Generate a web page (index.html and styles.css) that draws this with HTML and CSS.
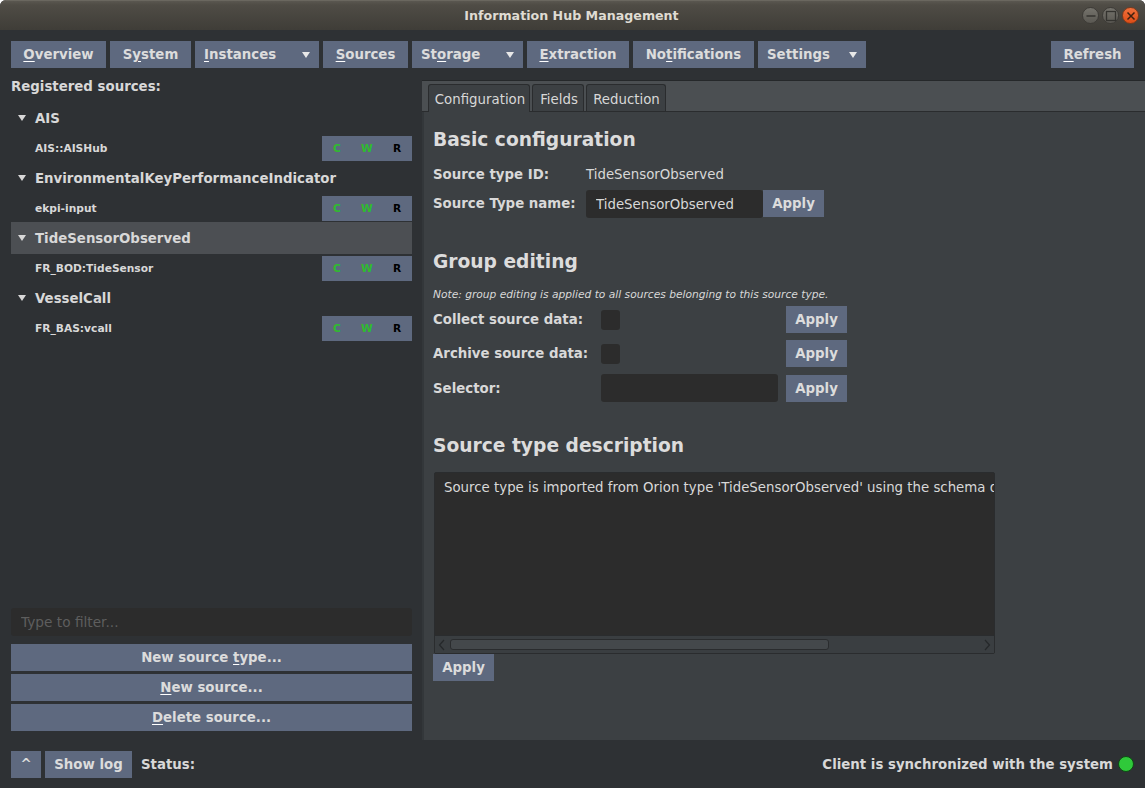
FILE: index.html
```html
<!DOCTYPE html>
<html lang="en">
  <head>
    <meta charset="UTF-8" />
    <meta name="viewport" content="width=device-width, initial-scale=1.0" />
    <title>Information Hub Management</title>
    <link rel="stylesheet" href="styles.css">
  </head>
  <body>
    <div class="window">
      <!-- Title bar -->
      <header class="titlebar">
        <span class="title">Information Hub Management</span>
        <div class="win-controls">
          <span class="win-btn"><svg width="12" height="12" viewBox="0 0 12 12"><path d="M1.5 6h9" stroke="#34332f" stroke-width="1.4" fill="none"/></svg></span>
          <span class="win-btn"><svg width="12" height="12" viewBox="0 0 12 12"><rect x="1.5" y="1.5" width="9" height="9" stroke="#34332f" stroke-width="1.3" fill="none"/></svg></span>
          <span class="win-btn close"><svg width="12" height="12" viewBox="0 0 12 12"><path d="M2.5 2.5l7 7M9.5 2.5l-7 7" stroke="#3f2010" stroke-width="1.5" fill="none"/></svg></span>
        </div>
      </header>

      <!-- Main toolbar -->
      <nav class="toolbar">
        <button class="btn tb-overview"><u>O</u>verview</button>
        <button class="btn tb-system">S<u>y</u>stem</button>
        <button class="btn menu tb-instances"><span><u>I</u>nstances</span><i class="arrow"></i></button>
        <button class="btn tb-sources"><u>S</u>ources</button>
        <button class="btn menu tb-storage"><span>St<u>o</u>rage</span><i class="arrow"></i></button>
        <button class="btn tb-extraction"><u>E</u>xtraction</button>
        <button class="btn tb-notifications">No<u>t</u>ifications</button>
        <button class="btn menu tb-settings"><span>Settings</span><i class="arrow"></i></button>
        <button class="btn tb-refresh"><u>R</u>efresh</button>
      </nav>

      <div class="main">
        <!-- Source tree -->
        <aside class="sidebar">
          <div class="side-title">Registered sources:</div>
          <ul class="tree">
            <li class="type-row"><i class="arrow tree-arrow"></i>AIS</li>
            <li class="source-row"><span>AIS::AISHub</span><div class="cwr"><b class="ok">C</b><b class="ok">W</b><b>R</b></div></li>
            <li class="type-row"><i class="arrow tree-arrow"></i>EnvironmentalKeyPerformanceIndicator</li>
            <li class="source-row"><span>ekpi-input</span><div class="cwr"><b class="ok">C</b><b class="ok">W</b><b>R</b></div></li>
            <li class="type-row selected"><i class="arrow tree-arrow"></i>TideSensorObserved</li>
            <li class="source-row"><span>FR_BOD:TideSensor</span><div class="cwr"><b class="ok">C</b><b class="ok">W</b><b>R</b></div></li>
            <li class="type-row"><i class="arrow tree-arrow"></i>VesselCall</li>
            <li class="source-row"><span>FR_BAS:vcall</span><div class="cwr"><b class="ok">C</b><b class="ok">W</b><b>R</b></div></li>
          </ul>
          <input class="filter" type="text" placeholder="Type to filter..." />
          <div class="side-actions">
            <button class="btn wide">New source <u>t</u>ype...</button>
            <button class="btn wide"><u>N</u>ew source...</button>
            <button class="btn wide"><u>D</u>elete source...</button>
          </div>
        </aside>

        <!-- Tabbed details -->
        <section class="panel">
          <div class="tabs">
            <div class="tab active tab-config">Configuration</div>
            <div class="tab tab-fields">Fields</div>
            <div class="tab tab-reduction">Reduction</div>
          </div>
          <div class="tab-body">
            <h2 class="first">Basic configuration</h2>
            <div class="row type-id"><label class="lbl-basic">Source type ID:</label><span>TideSensorObserved</span></div>
            <div class="row name-row"><label class="lbl-basic">Source Type name:</label><input class="field name-field" type="text" value="TideSensorObserved" /><button class="btn apply">Apply</button></div>

            <h2 class="group-title">Group editing</h2>
            <p class="note">Note: group editing is applied to all sources belonging to this source type.</p>
            <div class="row group-row"><label class="lbl-group">Collect source data:</label><span class="check"></span><button class="btn apply">Apply</button></div>
            <div class="row group-row"><label class="lbl-group">Archive source data:</label><span class="check"></span><button class="btn apply">Apply</button></div>
            <div class="row group-row selector-row"><label class="lbl-group">Selector:</label><input class="field selector" type="text" /><button class="btn apply">Apply</button></div>

            <h2 class="desc-title">Source type description</h2>
            <div class="desc">
              <div class="desc-text">Source type is imported from Orion type 'TideSensorObserved' using the schema d</div>
              <div class="hscroll">
                <svg width="8" height="12" viewBox="0 0 8 12"><path d="M6 1L1.5 6 6 11" stroke="#25282a" stroke-width="1.2" fill="none"/></svg>
                <div class="track"><div class="thumb"></div></div>
                <svg width="8" height="12" viewBox="0 0 8 12"><path d="M2 1l4.5 5L2 11" stroke="#25282a" stroke-width="1.2" fill="none"/></svg>
              </div>
            </div>
            <button class="btn apply">Apply</button>
          </div>
        </section>
      </div>

      <!-- Status bar -->
      <footer class="statusbar">
        <button class="btn caret">^</button>
        <button class="btn show-log">Show log</button>
        <span class="status-label">Status:</span>
        <span class="sync">Client is synchronized with the system</span>
        <span class="led"></span>
      </footer>
    </div>
  </body>
</html>
```

FILE: styles.css
```css
* {
  box-sizing: border-box;
}
html,
body {
  height: 100%;
}
body {
  margin: 0;
  background: #fff;
  font-family: "DejaVu Sans", sans-serif;
  font-size: 13.33px;
  color: #d8d8d8;
  overflow: hidden;
}
.window {
  height: 788px;
  display: flex;
  flex-direction: column;
  background: #2e3134;
  border-radius: 6px 6px 0 0;
  overflow: hidden;
}
.titlebar {
  height: 30px;
  flex: none;
  display: flex;
  align-items: center;
  justify-content: center;
  position: relative;
  background: linear-gradient(#5a5750 0, #4f4c45 4px, #3f3d38 100%);
  border-top: 1px solid #6a675f;
}
.title {
  font-size: 12.65px;
  font-weight: bold;
  color: #dfdbd2;
  margin-left: -2px;
}
.win-controls {
  position: absolute;
  right: 6px;
  top: 6px;
  display: flex;
  gap: 3px;
}
.win-btn {
  width: 17px;
  height: 17px;
  border-radius: 50%;
  display: flex;
  align-items: center;
  justify-content: center;
  background: linear-gradient(#75736c, #5a5852);
  border: 1px solid #3d3b37;
}
.win-btn.close {
  background: linear-gradient(#f0703c, #dd4d16);
  border-color: #7d3a1c;
}
.toolbar {
  height: 50px;
  flex: none;
  display: flex;
  gap: 4px;
  padding: 11px 11px 0;
}
.btn {
  height: 27px;
  border: none;
  background: #5e697f;
  color: #dcdcdc;
  font: bold 13.33px "DejaVu Sans", sans-serif;
  padding: 0;
  display: flex;
  align-items: center;
  justify-content: center;
  white-space: pre;
}
.btn u {
  text-underline-offset: 2px;
  text-decoration-color: #fff;
}
.btn.menu {
  justify-content: space-between;
  padding: 0 9px;
}
.arrow {
  width: 0;
  height: 0;
  border-left: 4.5px solid transparent;
  border-right: 4.5px solid transparent;
  border-top: 6px solid #e8e8e8;
}
.tb-overview { width: 95px; }
.tb-system { width: 81px; }
.tb-instances { width: 124px; }
.tb-sources { width: 85px; }
.tb-storage { width: 111px; }
.tb-extraction { width: 102px; }
.tb-notifications { width: 121px; }
.tb-settings { width: 108px; }
.tb-refresh { width: 83px; margin-left: auto; }

.main {
  flex: 1;
  min-height: 0;
  display: flex;
}
.sidebar {
  width: 422px;
  flex: none;
  display: flex;
  flex-direction: column;
  padding: 0 10px 9px 11px;
}
.side-title {
  height: 23px;
  font-weight: bold;
  line-height: 14px;
}
.tree {
  list-style: none;
  margin: 0;
  padding: 0;
  flex: 1;
}
.type-row {
  height: 30px;
  display: flex;
  align-items: center;
  font-weight: bold;
  padding-left: 7px;
}
.type-row.selected {
  background: #4c4f53;
  height: 32px;
  margin: -1px 0;
}
.tree-arrow {
  margin-right: 9px;
  border-left-width: 4px;
  border-right-width: 4px;
  border-top: 6px solid #d8d8d8;
}
.source-row {
  height: 30px;
  display: flex;
  align-items: center;
  justify-content: space-between;
  padding-left: 24px;
  font-size: 10.67px;
  font-weight: bold;
}
.cwr {
  width: 90px;
  height: 25px;
  background: #5e697f;
  display: grid;
  grid-template-columns: repeat(3, 30px);
  align-items: center;
  justify-items: center;
  color: #000;
  font-size: 10.67px;
}
.cwr .ok {
  color: #2fbb2f;
}
.filter {
  height: 28px;
  flex: none;
  background: #2c2c2c;
  border: none;
  border-radius: 3px;
  padding: 0 10px;
  font: 13.7px "DejaVu Sans", sans-serif;
  color: #ddd;
  margin-bottom: 8px;
}
.filter::placeholder {
  color: #5e5e5e;
}
.side-actions {
  display: flex;
  flex-direction: column;
  gap: 3px;
}
.btn.wide {
  width: 100%;
}

.panel {
  flex: 1;
  display: flex;
  flex-direction: column;
  background: #3c4043;
  height: 660px;
  border-top: 1px solid #25282a;
}
.tabs {
  height: 31px;
  flex: none;
  display: flex;
  padding: 3px 0 0 6px;
  background: #4b4f52;
  border-bottom: 1px solid #2a2c2e;
}
.tab {
  height: 27px;
  padding: 2px 0 0;
  display: flex;
  align-items: center;
  justify-content: center;
  background: #3c4043;
  border: 1px solid #2a2c2e;
  border-bottom: none;
  border-radius: 3px 3px 0 0;
}
.tab.active {
  height: 28px;
}
.tab-config { width: 102px; margin-right: 2px; padding-left: 2px; }
.tab-fields { width: 52px; margin-right: 2px; padding-left: 2px; }
.tab-reduction { width: 80px; padding-left: 1px; }
.tab-body {
  flex: 1;
  padding: 0 9px;
  border-left: 2px solid #33373a;
}
h2 {
  margin: 0;
  font-size: 18.67px;
  font-weight: bold;
  color: #dcdcdc;
  line-height: 24px;
}
h2.first { padding-top: 16px; height: 44px; }
h2.group-title { margin-top: 32px; }
h2.desc-title { margin-top: 32px; }
.row {
  display: flex;
  align-items: center;
  min-height: 27px;
}
.row label {
  font-weight: bold;
}
.lbl-basic { width: 153px; }
.lbl-group { width: 168px; }
.type-id {
  height: 27px;
  margin-top: 5px;
}
.name-row {
  margin-top: 2px;
  align-items: flex-start;
}
.name-row label {
  line-height: 27px;
}
.field {
  background: #2c2c2c;
  border: none;
  border-radius: 3px;
  color: #d8d8d8;
  font: 13.33px "DejaVu Sans", sans-serif;
  height: 28px;
  padding: 0 10px;
}
.name-field { width: 177px; }
.apply {
  width: 61px;
  flex: none;
}
.note {
  margin: 15px 0 5px;
  font-size: 10.67px;
  font-style: italic;
  line-height: 12px;
}
.group-row {
  height: 27px;
  margin-bottom: 7px;
}
.selector-row {
  margin-top: 8px;
}
.check {
  width: 19px;
  height: 20px;
  background: #2c2c2c;
  border-radius: 3px;
  margin-right: 166px;
}
.selector {
  width: 177px;
  margin-right: 8px;
  align-self: flex-end;
}
.desc {
  width: 561px;
  height: 182px;
  margin: 14px 0 0 1px;
  display: flex;
  flex-direction: column;
  background: #2c2c2c;
  border: 1px solid #2a2c2e;
  border-radius: 2px;
}
.desc-text {
  flex: 1;
  padding: 7px 9px;
  white-space: nowrap;
  overflow: hidden;
}
.hscroll {
  height: 18px;
  flex: none;
  display: flex;
  align-items: center;
  gap: 4px;
  padding: 0 3px;
  background: #3a3e41;
  border-top: 1px solid #2a2c2e;
}
.track {
  flex: 1;
}
.thumb {
  width: 379px;
  height: 11px;
  background: #44484b;
  border: 1px solid #2a2c2e;
  border-radius: 3px;
}
.statusbar {
  height: 48px;
  flex: none;
  display: flex;
  align-items: center;
  padding: 0 11px 0;
  gap: 4px;
}
.caret { width: 30px; }
.show-log { width: 87px; }
.status-label {
  font-weight: bold;
  margin-left: 5px;
}
.sync {
  font-weight: bold;
  margin-left: auto;
  margin-right: 1px;
}
.led {
  width: 16px;
  height: 16px;
  border-radius: 50%;
  background: #2fc93a;
  border: 1px solid #0e4a14;
}
```
